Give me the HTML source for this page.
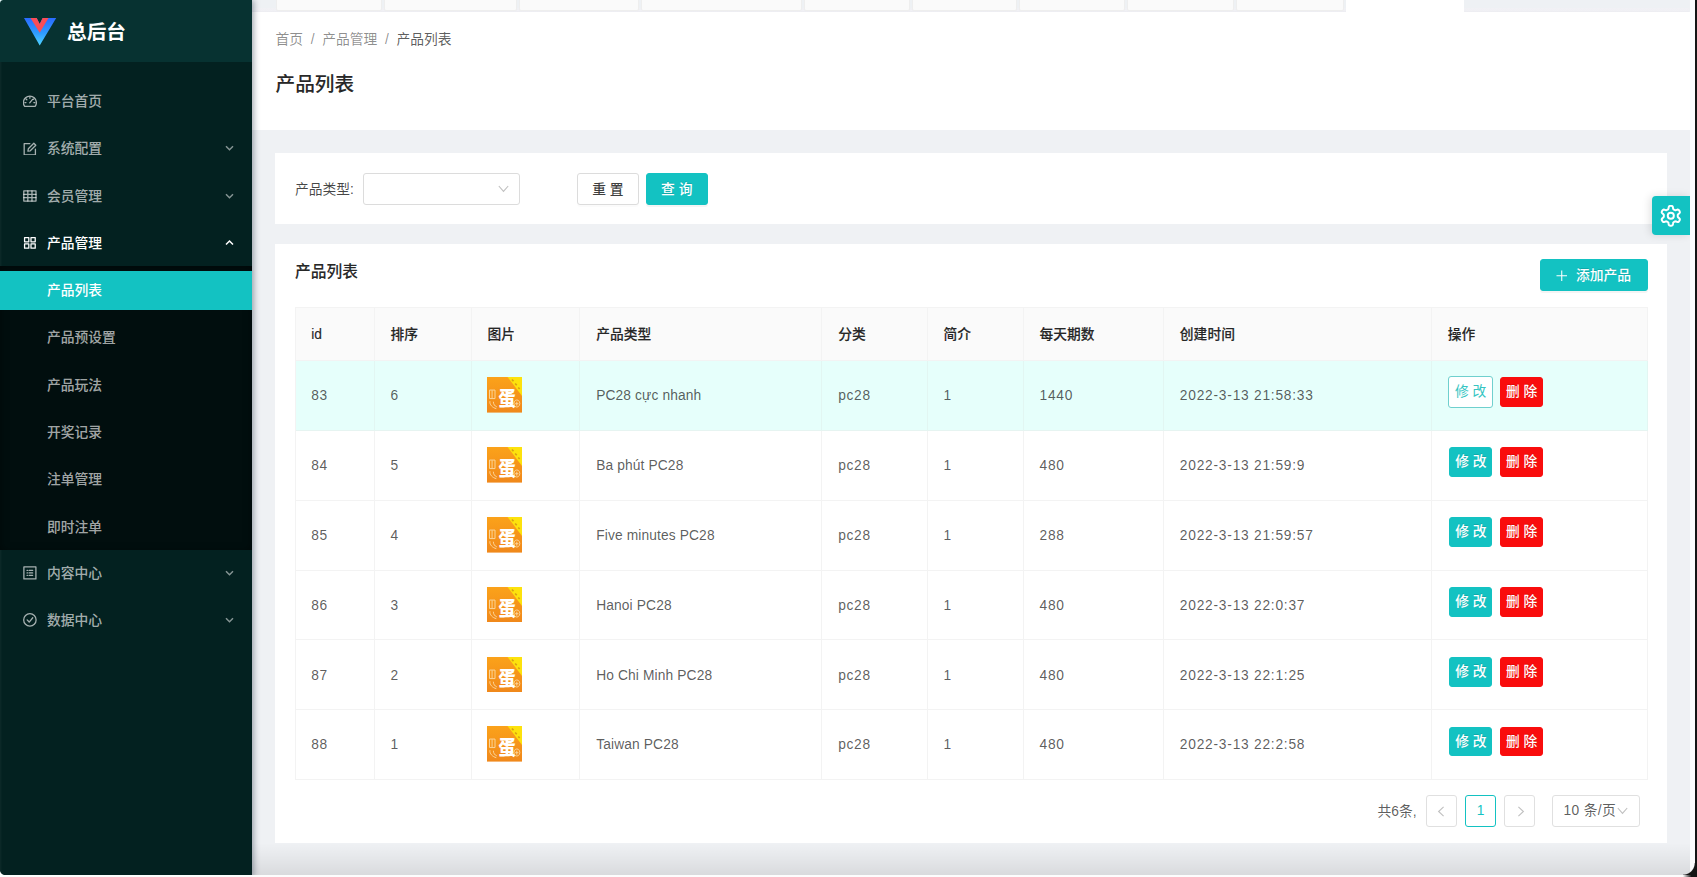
<!DOCTYPE html>
<html lang="zh-CN">
<head>
<meta charset="utf-8">
<title>产品列表 - 总后台</title>
<style>
*{box-sizing:border-box;margin:0;padding:0}
html,body{width:1697px;height:877px;overflow:hidden}
body{position:relative;background:#eff1f4;font-family:"Liberation Sans","Noto Sans CJK SC",sans-serif;font-size:13.77px;color:rgba(0,0,0,.65);line-height:1.5715}
.abs{position:absolute}
/* ---------- sidebar ---------- */
#sider{position:absolute;left:0;top:0;width:251.5px;height:877px;background:#032120;box-shadow:2px 0 6px rgba(0,21,41,.35),inset 1.5px 0 0 rgba(255,255,255,.035);z-index:5}
#logo{position:absolute;left:0;top:0;width:252px;height:62px;background:#073231}
#logo svg{position:absolute;left:23.7px;top:17.9px}
#logo h1{position:absolute;left:67px;top:0;height:62px;line-height:64px;font-size:19.66px;font-weight:700;color:#fff;letter-spacing:0}
.mi{font-weight:500;position:absolute;left:0;width:252px;height:39.3px;line-height:39.3px;color:rgba(255,255,255,.65);font-size:13.77px;white-space:nowrap}
.mi .tx{position:absolute;left:47px;top:.5px}
.mi svg.ic{position:absolute;left:23.3px;top:12.6px}
.mi svg.ar{position:absolute;left:225px;top:15.5px}
.mi.open{color:#fff}
#sub{position:absolute;left:0;top:266px;width:252px;height:283.5px;background:#010e0e;box-shadow:inset 0 2px 8px rgba(0,0,0,.45)}
.mi.sel{background:#13c2c2;color:#fff}
/* ---------- header ---------- */
#tabs{position:absolute;left:252px;top:0;width:1437px;height:12.4px;background:linear-gradient(#eef1f4 0,#eef1f4 7.8px,#f1f1f5 8px,#f0f0f4 11px,#e9e9ee 12.4px);overflow:hidden}
#tabs i{position:absolute;top:-20px;height:31.2px;background:#fafafa;border:1px solid #eeeeee;border-radius:0 0 2px 2px}
#tabs i.on{background:#fff;border-color:#fff;height:34px}
#ph{position:absolute;left:252px;top:12px;width:1438px;height:118px;background:#fff}
#bc{position:absolute;left:23.5px;top:16.5px;font-size:13.77px;line-height:22px;color:rgba(0,0,0,.45);white-space:nowrap}
#bc span.sep{margin:0 7.7px}
#bc b{font-weight:400;color:rgba(0,0,0,.65)}
#ph h2{position:absolute;left:23.5px;top:56.2px;font-size:19.66px;line-height:32px;font-weight:500;-webkit-text-stroke:.15px rgba(0,0,0,.8);color:rgba(0,0,0,.85)}
/* ---------- cards ---------- */
.card{position:absolute;left:275px;width:1392px;background:#fff}
.btn{position:absolute;height:31.5px;line-height:31px;border-radius:3px;text-align:center;font-size:13.77px;font-weight:500;border:1px solid #dcdcdc;background:#fff;color:rgba(0,0,0,.75);box-shadow:0 2px 0 rgba(0,0,0,.015);white-space:nowrap}
.btn.pri{font-weight:500;background:#13c2c2;border-color:#13c2c2;color:#fff;text-shadow:0 -1px 0 rgba(0,0,0,.12);box-shadow:0 2px 0 rgba(0,0,0,.045)}
/* ---------- table ---------- */
#tb{position:absolute;left:19.5px;top:60.5px;width:1353.8px;border-collapse:separate;border-spacing:0;table-layout:fixed;border-top:1px solid #f3f3f3;border-left:1px solid #f3f3f3;font-size:13.77px}
#tb th{height:52.6px;background:#fafafa;text-align:left;font-weight:500;-webkit-text-stroke:.2px rgba(0,0,0,.8);color:rgba(0,0,0,.85);padding:1.4px 15.7px 0;border-right:1px solid #f3f3f3;border-bottom:1px solid #f3f3f3}
#tb td{height:69.85px;padding:1px 15.7px 0;border-right:1px solid #f3f3f3;border-bottom:1px solid #f3f3f3;color:rgba(0,0,0,.65);white-space:nowrap;position:relative}
#tb tr.hl td{background:#e6fffb;border-right-color:#e2f6f2;border-bottom-color:#e6f4f1}
#tb td.n{letter-spacing:.76px}
#tb td.c{letter-spacing:.68px}
#tb td.p{letter-spacing:.13px}
.sb{font-weight:500;position:absolute;top:16.4px;height:29.7px;line-height:28.2px;width:43.3px;text-align:center;font-size:13.77px;border-radius:3px;border:1px solid transparent;color:#fff;white-space:nowrap;text-shadow:0 -1px 0 rgba(0,0,0,.12)}
.sb.e{left:17.2px;background:#13c2c2;border-color:#13c2c2}
.sb.g{left:16.2px;top:15.3px;width:44.9px;height:31.3px;line-height:29.8px;background:#fff;border-color:#6fd0ce;color:#36c5c2;text-shadow:none;font-weight:400}
.sb.d{left:68.3px;width:42.8px;background:#f90d0d;border-color:#f90d0d}
.egg{display:block;width:35.2px;height:35.6px;position:relative;top:-.95px;left:-.2px}
/* ---------- pagination ---------- */
.pg{position:absolute;top:548.4px;height:31.4px;line-height:30.4px;border:1px solid #e0e0e0;border-radius:3px;background:#fff;text-align:center;font-size:13.77px;color:rgba(0,0,0,.65)}
</style>
</head>
<body>
<svg width="0" height="0" style="position:absolute"><defs><linearGradient id="eg" x1="0" y1="0" x2="0" y2="1"><stop offset="0" stop-color="#fba21a"/><stop offset="1" stop-color="#f0881b"/></linearGradient></defs></svg>

<!-- ======== SIDEBAR ======== -->
<div id="sider">
  <div id="logo">
    <svg width="33" height="29" viewBox="0 0 33 29">
      <defs><linearGradient id="lg1" x1="0" y1="0" x2="0" y2="1"><stop offset="0" stop-color="#2a6bff"/><stop offset="0.55" stop-color="#2f9cff"/><stop offset="1" stop-color="#4fd4ff"/></linearGradient></defs>
      <path d="M0 0H12.7L15.7 6L18.6 0H32.2L15.7 27.6Z" fill="url(#lg1)"/>
      <path d="M6.5 0H12.7L15.7 6L18.6 0H24.5L15.7 14.8Z" fill="#fb4d56"/>
    </svg>
    <h1>总后台</h1>
  </div>
  <div id="sub"></div>
  <div id="menu">
    <div class="mi" style="top:81.7px"><svg class="ic" width="13.8" height="13.8" viewBox="0 0 14 14"><path d="M1.7 12.6 A6.6 6.6 0 1 1 12.3 12.6 Z" stroke="currentColor" stroke-width="1.3" fill="none" stroke-linecap="round" stroke-linejoin="round"/><path d="M6.8 9 L9.7 5.4" stroke="currentColor" stroke-width="1.3" fill="none" stroke-linecap="round" stroke-linejoin="round"/><path d="M7 3.2v1.1M3.1 5l.8.8M10.9 5l-.5.5M1.9 8.7h1.1M11 8.7h1.1" stroke="currentColor" stroke-width="1.3" fill="none" stroke-linecap="round" stroke-linejoin="round" stroke-width="1"/></svg><span class="tx">平台首页</span></div>
    <div class="mi" style="top:128.98px"><svg class="ic" width="13.8" height="13.8" viewBox="0 0 14 14"><path d="M12.6 7.2V13H1.2V1.6H7" stroke="currentColor" stroke-width="1.3" fill="none" stroke-linecap="round" stroke-linejoin="round"/><path d="M5 9.3 L5.4 6.9 L11 1.3 L13 3.3 L7.4 8.9 Z" stroke="currentColor" stroke-width="1.3" fill="none" stroke-linecap="round" stroke-linejoin="round" stroke-width="1.1"/></svg><span class="tx">系统配置</span><svg class="ar" width="9" height="8" viewBox="0 0 9 8"><path d="M1 2.2 L4.5 5.7 L8 2.2" stroke="currentColor" stroke-opacity=".8" stroke-width="1.5" fill="none"/></svg></div>
    <div class="mi" style="top:176.26px"><svg class="ic" width="13.8" height="13.8" viewBox="0 0 14 14"><rect x="0.8" y="1.9" width="12.4" height="10.4" stroke="currentColor" stroke-width="1.3" fill="none" stroke-linecap="round" stroke-linejoin="round" stroke-width="1.2"/><path d="M0.8 5.4H13.2M0.8 8.8H13.2M4.9 1.9V12.3M9.1 1.9V12.3" stroke="currentColor" stroke-width="1.3" fill="none" stroke-linecap="round" stroke-linejoin="round" stroke-width="0.85"/></svg><span class="tx">会员管理</span><svg class="ar" width="9" height="8" viewBox="0 0 9 8"><path d="M1 2.2 L4.5 5.7 L8 2.2" stroke="currentColor" stroke-opacity=".8" stroke-width="1.5" fill="none"/></svg></div>
    <div class="mi open" style="top:223.54px"><svg class="ic" width="13.8" height="13.8" viewBox="0 0 14 14"><rect x="1.6" y="1.6" width="4.3" height="4.3" stroke="currentColor" stroke-width="1.3" fill="none" stroke-linecap="round" stroke-linejoin="round"/><rect x="8.1" y="1.6" width="4.3" height="4.3" stroke="currentColor" stroke-width="1.3" fill="none" stroke-linecap="round" stroke-linejoin="round"/><rect x="1.6" y="8.1" width="4.3" height="4.3" stroke="currentColor" stroke-width="1.3" fill="none" stroke-linecap="round" stroke-linejoin="round"/><rect x="8.1" y="8.1" width="4.3" height="4.3" stroke="currentColor" stroke-width="1.3" fill="none" stroke-linecap="round" stroke-linejoin="round"/></svg><span class="tx">产品管理</span><svg class="ar" width="9" height="8" viewBox="0 0 9 8"><path d="M1 5.5 L4.5 2 L8 5.5" stroke="currentColor" stroke-width="1.5" fill="none"/></svg></div>
    <div class="mi sel" style="top:270.6px"><span class="tx">产品列表</span></div>
    <div class="mi" style="top:317.9px"><span class="tx">产品预设置</span></div>
    <div class="mi" style="top:365.2px"><span class="tx">产品玩法</span></div>
    <div class="mi" style="top:412.4px"><span class="tx">开奖记录</span></div>
    <div class="mi" style="top:459.7px"><span class="tx">注单管理</span></div>
    <div class="mi" style="top:507.0px"><span class="tx">即时注单</span></div>
    <div class="mi" style="top:553.2px"><svg class="ic" width="13.8" height="13.8" viewBox="0 0 14 14"><rect x="0.9" y="0.9" width="12.2" height="12.2" stroke="currentColor" stroke-width="1.3" fill="none" stroke-linecap="round" stroke-linejoin="round"/><path d="M6.2 4.5H9.8M6.2 7H9.8M6.2 9.5H9.8" stroke="currentColor" stroke-width="1.3" fill="none" stroke-linecap="round" stroke-linejoin="round" stroke-width="1"/><path d="M4.1 4.5h.5M4.1 7h.5M4.1 9.5h.5" stroke="currentColor" stroke-width="1.3" fill="none" stroke-linecap="round" stroke-linejoin="round" stroke-width="1"/></svg><span class="tx">内容中心</span><svg class="ar" width="9" height="8" viewBox="0 0 9 8"><path d="M1 2.2 L4.5 5.7 L8 2.2" stroke="currentColor" stroke-opacity=".8" stroke-width="1.5" fill="none"/></svg></div>
    <div class="mi" style="top:600.4px"><svg class="ic" width="13.8" height="13.8" viewBox="0 0 14 14"><circle cx="7" cy="7" r="6.3" stroke="currentColor" stroke-width="1.3" fill="none" stroke-linecap="round" stroke-linejoin="round"/><path d="M4.2 7 L6.3 9.2 L9.9 4.8" stroke="currentColor" stroke-width="1.3" fill="none" stroke-linecap="round" stroke-linejoin="round"/></svg><span class="tx">数据中心</span><svg class="ar" width="9" height="8" viewBox="0 0 9 8"><path d="M1 2.2 L4.5 5.7 L8 2.2" stroke="currentColor" stroke-opacity=".8" stroke-width="1.5" fill="none"/></svg></div>
  </div>
</div>

<!-- ======== TOP TABS STRIP ======== -->
<div id="tabs"><i style="left:24.0px;width:105.5px"></i><i style="left:131.5px;width:133.0px"></i><i style="left:266.5px;width:120.0px"></i><i style="left:388.5px;width:161.5px"></i><i style="left:552.0px;width:105.5px"></i><i style="left:659.5px;width:105.0px"></i><i style="left:766.5px;width:106.5px"></i><i style="left:875.0px;width:107.0px"></i><i style="left:984.0px;width:107.5px"></i><i class="on" style="left:1093.5px;width:118.0px"></i></div>

<!-- ======== PAGE HEADER ======== -->
<div id="ph">
  <div id="bc">首页<span class="sep">/</span>产品管理<span class="sep">/</span><b>产品列表</b></div>
  <h2>产品列表</h2>
</div>

<!-- ======== FILTER CARD ======== -->
<div class="card" id="c1" style="top:153px;height:71px">
  <div class="abs" style="left:20px;top:21px;height:31.5px;line-height:31.5px;color:rgba(0,0,0,.72);white-space:nowrap">产品类型:</div>
  <div class="abs" style="left:88px;top:20px;width:157.3px;height:31.5px;border:1px solid #dcdcdc;border-radius:3px;background:#fff">
    <svg class="abs" style="left:133.5px;top:11px" width="11" height="8" viewBox="0 0 11 8"><path d="M0.8 1 L5.5 6.4 L10.2 1" stroke="rgba(0,0,0,.25)" stroke-width="1.1" fill="none"/></svg>
  </div>
  <div class="btn" style="left:301.7px;top:20px;width:62.3px">重 置</div>
  <div class="btn pri" style="left:370.8px;top:20px;width:62px">查 询</div>
</div>

<!-- ======== TABLE CARD ======== -->
<div class="card" id="c2" style="top:243.9px;height:599.2px"><div class="abs" style="left:0;top:3.1px;width:1392px;height:596px">
  <div class="abs" style="left:20px;top:12px;font-size:15.73px;line-height:26px;font-weight:500;-webkit-text-stroke:.15px rgba(0,0,0,.8);color:rgba(0,0,0,.85)">产品列表</div>
  <div class="btn pri" style="left:1265px;top:12.5px;width:107.7px;text-align:left"><svg class="abs" style="left:15.2px;top:9.3px" width="11.5" height="11.5" viewBox="0 0 12 12"><path d="M6 0.5V11.5M0.5 6H11.5" stroke="#fff" stroke-width="1.1"/></svg><span class="abs" style="left:35px;top:0">添加产品</span></div>
  <table id="tb"><colgroup><col style="width:79.2px"><col style="width:97.0px"><col style="width:108.8px"><col style="width:242.0px"><col style="width:105.3px"><col style="width:96px"><col style="width:140.4px"><col style="width:267.8px"><col style="width:216.3px"></colgroup>
  <thead><tr><th>id</th><th>排序</th><th>图片</th><th>产品类型</th><th>分类</th><th>简介</th><th>每天期数</th><th>创建时间</th><th>操作</th></tr></thead><tbody>
  <tr class="hl"><td class="n">83</td><td class="n">6</td><td><svg class="egg" viewBox="0 0 36 36" preserveAspectRatio="none"><rect width="36" height="36" fill="url(#eg)"/><polygon points="21,0 36,0 36,19.5" fill="#fde20d"/><path d="M25.5 2.5l1.6 1.8M28.8 6.6l1.6 1.8M32 10.6l1.4 1.6" stroke="#d9a013" stroke-width="1.7"/><path d="M2.6 13.2h5.6v8.6H2.6zM5.2 13.5v8M3 24.5c-.5 3.5 2.5 6.5 6.5 7.5M6.5 25c0 2.5 1.5 4.5 3.5 5.2" stroke="#fbd59a" stroke-width="1" fill="none"/><path d="M30.5 23.2a3 3.6 0 1 0 .1 0zM30.5 25v4M28.8 27h3.4" stroke="#fbd59a" stroke-width="1" fill="none"/><text transform="translate(11.7 29) scale(0.84 1)" font-family="'Liberation Sans','Noto Sans CJK SC',sans-serif" font-size="20.8" font-weight="900" fill="#fff">蛋</text></svg></td><td class="p">PC28 cực nhanh</td><td class="c">pc28</td><td class="n">1</td><td class="n">1440</td><td class="n">2022-3-13 21:58:33</td><td><span class="sb g">修 改</span><span class="sb d">删 除</span></td></tr>
  <tr><td class="n">84</td><td class="n">5</td><td><svg class="egg" viewBox="0 0 36 36" preserveAspectRatio="none"><rect width="36" height="36" fill="url(#eg)"/><polygon points="21,0 36,0 36,19.5" fill="#fde20d"/><path d="M25.5 2.5l1.6 1.8M28.8 6.6l1.6 1.8M32 10.6l1.4 1.6" stroke="#d9a013" stroke-width="1.7"/><path d="M2.6 13.2h5.6v8.6H2.6zM5.2 13.5v8M3 24.5c-.5 3.5 2.5 6.5 6.5 7.5M6.5 25c0 2.5 1.5 4.5 3.5 5.2" stroke="#fbd59a" stroke-width="1" fill="none"/><path d="M30.5 23.2a3 3.6 0 1 0 .1 0zM30.5 25v4M28.8 27h3.4" stroke="#fbd59a" stroke-width="1" fill="none"/><text transform="translate(11.7 29) scale(0.84 1)" font-family="'Liberation Sans','Noto Sans CJK SC',sans-serif" font-size="20.8" font-weight="900" fill="#fff">蛋</text></svg></td><td class="p">Ba phút PC28</td><td class="c">pc28</td><td class="n">1</td><td class="n">480</td><td class="n">2022-3-13 21:59:9</td><td><span class="sb e">修 改</span><span class="sb d">删 除</span></td></tr>
  <tr><td class="n">85</td><td class="n">4</td><td><svg class="egg" viewBox="0 0 36 36" preserveAspectRatio="none"><rect width="36" height="36" fill="url(#eg)"/><polygon points="21,0 36,0 36,19.5" fill="#fde20d"/><path d="M25.5 2.5l1.6 1.8M28.8 6.6l1.6 1.8M32 10.6l1.4 1.6" stroke="#d9a013" stroke-width="1.7"/><path d="M2.6 13.2h5.6v8.6H2.6zM5.2 13.5v8M3 24.5c-.5 3.5 2.5 6.5 6.5 7.5M6.5 25c0 2.5 1.5 4.5 3.5 5.2" stroke="#fbd59a" stroke-width="1" fill="none"/><path d="M30.5 23.2a3 3.6 0 1 0 .1 0zM30.5 25v4M28.8 27h3.4" stroke="#fbd59a" stroke-width="1" fill="none"/><text transform="translate(11.7 29) scale(0.84 1)" font-family="'Liberation Sans','Noto Sans CJK SC',sans-serif" font-size="20.8" font-weight="900" fill="#fff">蛋</text></svg></td><td class="p">Five minutes PC28</td><td class="c">pc28</td><td class="n">1</td><td class="n">288</td><td class="n">2022-3-13 21:59:57</td><td><span class="sb e">修 改</span><span class="sb d">删 除</span></td></tr>
  <tr><td class="n">86</td><td class="n">3</td><td><svg class="egg" viewBox="0 0 36 36" preserveAspectRatio="none"><rect width="36" height="36" fill="url(#eg)"/><polygon points="21,0 36,0 36,19.5" fill="#fde20d"/><path d="M25.5 2.5l1.6 1.8M28.8 6.6l1.6 1.8M32 10.6l1.4 1.6" stroke="#d9a013" stroke-width="1.7"/><path d="M2.6 13.2h5.6v8.6H2.6zM5.2 13.5v8M3 24.5c-.5 3.5 2.5 6.5 6.5 7.5M6.5 25c0 2.5 1.5 4.5 3.5 5.2" stroke="#fbd59a" stroke-width="1" fill="none"/><path d="M30.5 23.2a3 3.6 0 1 0 .1 0zM30.5 25v4M28.8 27h3.4" stroke="#fbd59a" stroke-width="1" fill="none"/><text transform="translate(11.7 29) scale(0.84 1)" font-family="'Liberation Sans','Noto Sans CJK SC',sans-serif" font-size="20.8" font-weight="900" fill="#fff">蛋</text></svg></td><td class="p">Hanoi PC28</td><td class="c">pc28</td><td class="n">1</td><td class="n">480</td><td class="n">2022-3-13 22:0:37</td><td><span class="sb e">修 改</span><span class="sb d">删 除</span></td></tr>
  <tr><td class="n">87</td><td class="n">2</td><td><svg class="egg" viewBox="0 0 36 36" preserveAspectRatio="none"><rect width="36" height="36" fill="url(#eg)"/><polygon points="21,0 36,0 36,19.5" fill="#fde20d"/><path d="M25.5 2.5l1.6 1.8M28.8 6.6l1.6 1.8M32 10.6l1.4 1.6" stroke="#d9a013" stroke-width="1.7"/><path d="M2.6 13.2h5.6v8.6H2.6zM5.2 13.5v8M3 24.5c-.5 3.5 2.5 6.5 6.5 7.5M6.5 25c0 2.5 1.5 4.5 3.5 5.2" stroke="#fbd59a" stroke-width="1" fill="none"/><path d="M30.5 23.2a3 3.6 0 1 0 .1 0zM30.5 25v4M28.8 27h3.4" stroke="#fbd59a" stroke-width="1" fill="none"/><text transform="translate(11.7 29) scale(0.84 1)" font-family="'Liberation Sans','Noto Sans CJK SC',sans-serif" font-size="20.8" font-weight="900" fill="#fff">蛋</text></svg></td><td class="p">Ho Chi Minh PC28</td><td class="c">pc28</td><td class="n">1</td><td class="n">480</td><td class="n">2022-3-13 22:1:25</td><td><span class="sb e">修 改</span><span class="sb d">删 除</span></td></tr>
  <tr><td class="n">88</td><td class="n">1</td><td><svg class="egg" viewBox="0 0 36 36" preserveAspectRatio="none"><rect width="36" height="36" fill="url(#eg)"/><polygon points="21,0 36,0 36,19.5" fill="#fde20d"/><path d="M25.5 2.5l1.6 1.8M28.8 6.6l1.6 1.8M32 10.6l1.4 1.6" stroke="#d9a013" stroke-width="1.7"/><path d="M2.6 13.2h5.6v8.6H2.6zM5.2 13.5v8M3 24.5c-.5 3.5 2.5 6.5 6.5 7.5M6.5 25c0 2.5 1.5 4.5 3.5 5.2" stroke="#fbd59a" stroke-width="1" fill="none"/><path d="M30.5 23.2a3 3.6 0 1 0 .1 0zM30.5 25v4M28.8 27h3.4" stroke="#fbd59a" stroke-width="1" fill="none"/><text transform="translate(11.7 29) scale(0.84 1)" font-family="'Liberation Sans','Noto Sans CJK SC',sans-serif" font-size="20.8" font-weight="900" fill="#fff">蛋</text></svg></td><td class="p">Taiwan PC28</td><td class="c">pc28</td><td class="n">1</td><td class="n">480</td><td class="n">2022-3-13 22:2:58</td><td><span class="sb e">修 改</span><span class="sb d">删 除</span></td></tr>
  </tbody></table>
  <div class="abs" style="left:1102.5px;top:548.9px;height:31.5px;line-height:31.5px;white-space:nowrap">共6条,</div>
  <div class="pg" style="left:1150.6px;width:31.3px"><svg class="abs" style="left:10.5px;top:9.5px" width="8" height="11" viewBox="0 0 8 11"><path d="M6.6 0.8 L1.6 5.5 L6.6 10.2" stroke="rgba(0,0,0,.25)" stroke-width="1.1" fill="none"/></svg></div>
  <div class="pg" style="left:1189.9px;width:31.3px;border-color:#13c2c2;color:#13c2c2">1</div>
  <div class="pg" style="left:1229.2px;width:31.3px"><svg class="abs" style="left:11.5px;top:9.5px" width="8" height="11" viewBox="0 0 8 11"><path d="M1.4 0.8 L6.4 5.5 L1.4 10.2" stroke="rgba(0,0,0,.25)" stroke-width="1.1" fill="none"/></svg></div>
  <div class="pg" style="left:1276.5px;width:88px;text-align:left;padding-left:11px;letter-spacing:.35px">10 条/页<svg class="abs" style="left:64px;top:11px" width="11" height="8" viewBox="0 0 11 8"><path d="M0.8 1 L5.5 6.4 L10.2 1" stroke="rgba(0,0,0,.25)" stroke-width="1.1" fill="none"/></svg></div>
</div></div>

<!-- ======== SETTINGS HANDLE ======== -->
<div class="abs" style="left:1652.3px;top:195.8px;width:37.7px;height:38.9px;background:#13c2c2;border-radius:4px 0 0 4px;box-shadow:-2px 0 8px rgba(0,0,0,.12)">
  <svg class="abs" style="left:8.2px;top:9.2px" width="21.6" height="21.6" viewBox="0 0 22 22"><path d="M19.76 16.06 L19.47 16.50 L19.14 16.92 L18.72 17.25 L18.07 17.37 L17.08 17.08 L16.14 16.71 L15.57 16.65 L15.19 16.77 L14.87 16.95 L14.54 17.14 L14.22 17.32 L13.90 17.52 L13.60 17.78 L13.37 18.31 L13.23 19.31 L12.98 20.31 L12.55 20.81 L12.05 21.01 L11.53 21.09 L11.00 21.11 L10.47 21.09 L9.95 21.01 L9.45 20.81 L9.02 20.31 L8.77 19.31 L8.63 18.31 L8.40 17.78 L8.10 17.52 L7.78 17.32 L7.46 17.14 L7.13 16.95 L6.81 16.77 L6.43 16.65 L5.86 16.71 L4.92 17.08 L3.93 17.37 L3.28 17.25 L2.86 16.92 L2.53 16.50 L2.24 16.06 L2.00 15.59 L1.81 15.09 L1.73 14.56 L1.95 13.94 L2.69 13.23 L3.48 12.60 L3.82 12.14 L3.90 11.75 L3.91 11.37 L3.91 11.00 L3.91 10.63 L3.90 10.25 L3.82 9.86 L3.48 9.40 L2.69 8.77 L1.95 8.06 L1.73 7.44 L1.81 6.91 L2.00 6.41 L2.24 5.94 L2.53 5.50 L2.86 5.08 L3.28 4.75 L3.93 4.63 L4.92 4.92 L5.86 5.29 L6.43 5.35 L6.81 5.23 L7.13 5.05 L7.46 4.86 L7.78 4.68 L8.10 4.48 L8.40 4.22 L8.63 3.69 L8.77 2.69 L9.02 1.69 L9.45 1.19 L9.95 0.99 L10.47 0.91 L11.00 0.89 L11.53 0.91 L12.05 0.99 L12.55 1.19 L12.98 1.69 L13.23 2.69 L13.37 3.69 L13.60 4.22 L13.90 4.48 L14.22 4.68 L14.54 4.86 L14.87 5.05 L15.19 5.23 L15.57 5.35 L16.14 5.29 L17.08 4.92 L18.07 4.63 L18.72 4.75 L19.14 5.08 L19.47 5.50 L19.76 5.94 L20.00 6.41 L20.19 6.91 L20.27 7.44 L20.05 8.06 L19.31 8.77 L18.52 9.40 L18.18 9.86 L18.10 10.25 L18.09 10.63 L18.09 11.00 L18.09 11.37 L18.10 11.75 L18.18 12.14 L18.52 12.60 L19.31 13.23 L20.05 13.94 L20.27 14.56 L20.19 15.09 L20.00 15.59Z" fill="none" stroke="#fff" stroke-width="2" stroke-linejoin="round"/><circle cx="11" cy="11" r="3.1" fill="none" stroke="#fff" stroke-width="2"/></svg>
</div>

<!-- ======== WINDOW EDGES ======== -->
<div class="abs" style="left:252px;top:843px;width:1438px;height:32px;background:linear-gradient(rgba(0,0,0,0),rgba(0,0,0,.035) 40%,rgba(0,0,0,.095));z-index:1"></div>
<div class="abs" style="left:1690px;top:0;width:5px;height:877px;background:#fcfcfd;z-index:6"></div>
<div class="abs" style="left:0;top:875px;width:1697px;height:2px;background:#fdfdfd;z-index:7"></div>
<div class="abs" style="left:1694.7px;top:0;width:2.3px;height:877px;background:#141414;z-index:8"></div>
<div class="abs" style="left:1683px;top:863px;width:12px;height:12px;z-index:8;background:radial-gradient(circle at 0 0,rgba(20,20,20,0) 11.2px,#141414 12.2px)"></div>
<div class="abs" style="left:1683px;top:875px;width:12px;height:2px;z-index:8;background:linear-gradient(90deg,rgba(20,20,20,0),#141414 70%)"></div>
<div class="abs" style="left:0;top:0;width:3px;height:3px;z-index:8;background:radial-gradient(circle at 3px 3px,rgba(230,250,250,0) 2.4px,#e4f8f8 3.3px)"></div>
<div class="abs" style="left:0;top:870px;width:5px;height:5px;z-index:8;background:radial-gradient(circle at 5px 0,rgba(255,255,255,0) 4.6px,#fdfdfd 5.4px)"></div>

</body>
</html>
